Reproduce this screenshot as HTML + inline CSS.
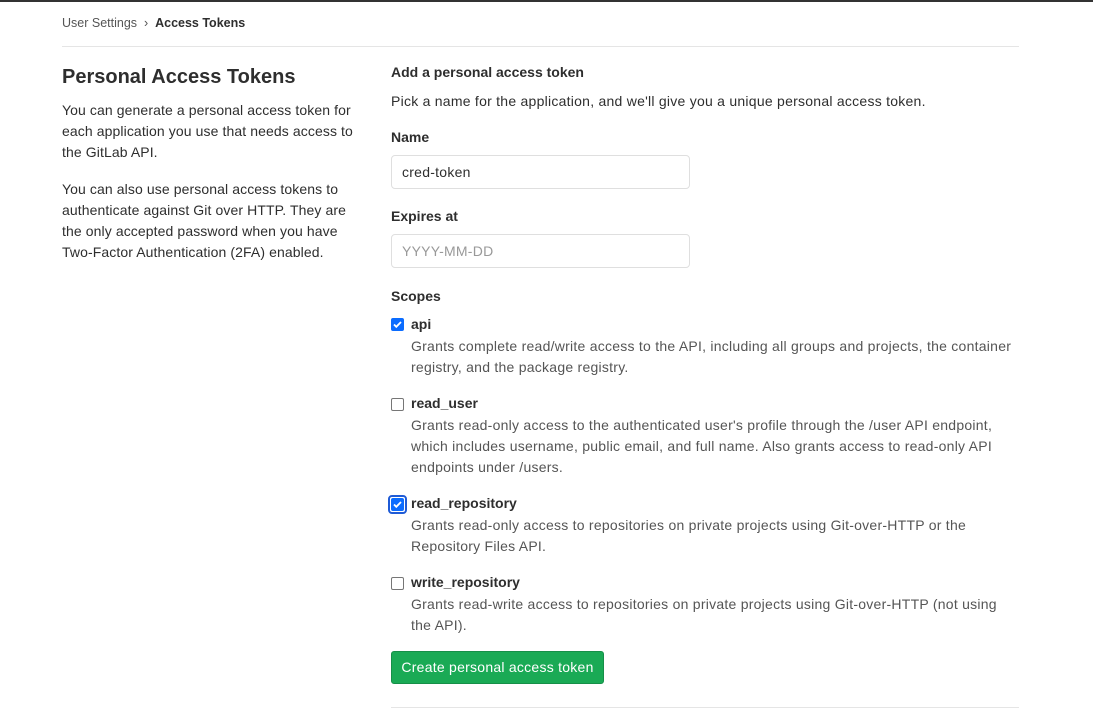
<!DOCTYPE html>
<html><head><meta charset="utf-8"><style>
*{box-sizing:border-box;margin:0;padding:0}
body{width:1093px;height:710px;overflow:hidden;background:#fff;font-family:"Liberation Sans",sans-serif;color:#2e2e2e;font-size:14px;position:relative;border-top:2px solid #333;letter-spacing:0.25px}
.a{position:absolute}
.bc{left:62px;top:14px;font-size:12.5px;color:#555;letter-spacing:0}
.bc b{color:#2e2e2e}
.hr{left:62px;width:957px;height:1px;background:#e5e5e5}
h2{font-size:20px;font-weight:bold;color:#2e2e2e;letter-spacing:0}
p{line-height:21px}
.in{width:299px;height:34px;border:1px solid #dfdfdf;border-radius:4px;padding:0 10px;line-height:32px;font-size:14px}
.lbl{font-weight:bold;letter-spacing:0}
.cb{width:13px;height:13px;border:1px solid #767676;border-radius:2px;background:#fff}
.cb.on{background:#0b6cff;border-color:#0b6cff}
.cb.on svg{display:block}
.desc{color:#555;line-height:21px;width:606px}
.btn{left:391px;top:651px;width:213px;height:33px;background:#1aaa55;border:1px solid #168f48;border-radius:3px;color:#fff;font-size:14px;text-align:center;line-height:31px}
</style></head><body>
<div class="a bc">User Settings &nbsp;›&nbsp; <b>Access Tokens</b></div>
<div class="a hr" style="top:44px"></div>
<h2 class="a" style="left:62px;top:64px">Personal Access Tokens</h2>
<p class="a" style="left:62px;top:98px;width:300px;letter-spacing:0.1px">You can generate a personal access token for each application you use that needs access to the GitLab API.</p>
<p class="a" style="left:62px;top:177px;width:300px;letter-spacing:0.1px">You can also use personal access tokens to authenticate against Git over HTTP. They are the only accepted password when you have Two-Factor Authentication (2FA) enabled.</p>
<div class="a lbl" style="left:391px;top:62px">Add a personal access token</div>
<p class="a" style="left:391px;top:89px">Pick a name for the application, and we'll give you a unique personal access token.</p>
<div class="a lbl" style="left:391px;top:127px">Name</div>
<div class="a in" style="left:391px;top:153px">cred-token</div>
<div class="a lbl" style="left:391px;top:206px">Expires at</div>
<div class="a in" style="left:391px;top:232px;color:#999">YYYY-MM-DD</div>
<div class="a lbl" style="left:391px;top:286px">Scopes</div>

<div class="a cb on" style="left:391px;top:316px"><svg width="11" height="11" viewBox="0 0 11 11"><path d="M2 5.5l2.3 2.3L9 3" stroke="#fff" stroke-width="1.8" fill="none"/></svg></div>
<div class="a lbl" style="left:411px;top:314px">api</div>
<div class="a desc" style="left:411px;top:334px">Grants complete read/write access to the API, including all groups and projects, the container registry, and the package registry.</div>

<div class="a cb" style="left:391px;top:396px"></div>
<div class="a lbl" style="left:411px;top:393px">read_user</div>
<div class="a desc" style="left:411px;top:413px">Grants read-only access to the authenticated user's profile through the /user API endpoint, which includes username, public email, and full name. Also grants access to read-only API endpoints under /users.</div>

<div class="a" style="left:388px;top:493px;width:19px;height:19px;border:2px solid #1f5bd6;border-radius:4px"></div>
<div class="a cb on" style="left:391px;top:496px"><svg width="11" height="11" viewBox="0 0 11 11"><path d="M2 5.5l2.3 2.3L9 3" stroke="#fff" stroke-width="1.8" fill="none"/></svg></div>
<div class="a lbl" style="left:411px;top:493px">read_repository</div>
<div class="a desc" style="left:411px;top:513px">Grants read-only access to repositories on private projects using Git-over-HTTP or the Repository Files API.</div>

<div class="a cb" style="left:391px;top:575px"></div>
<div class="a lbl" style="left:411px;top:572px">write_repository</div>
<div class="a desc" style="left:411px;top:592px">Grants read-write access to repositories on private projects using Git-over-HTTP (not using the API).</div>

<div class="a btn" style="top:649px">Create personal access token</div>
<div class="a" style="left:391px;top:705px;width:628px;height:1px;background:#e5e5e5"></div>
</body></html>
